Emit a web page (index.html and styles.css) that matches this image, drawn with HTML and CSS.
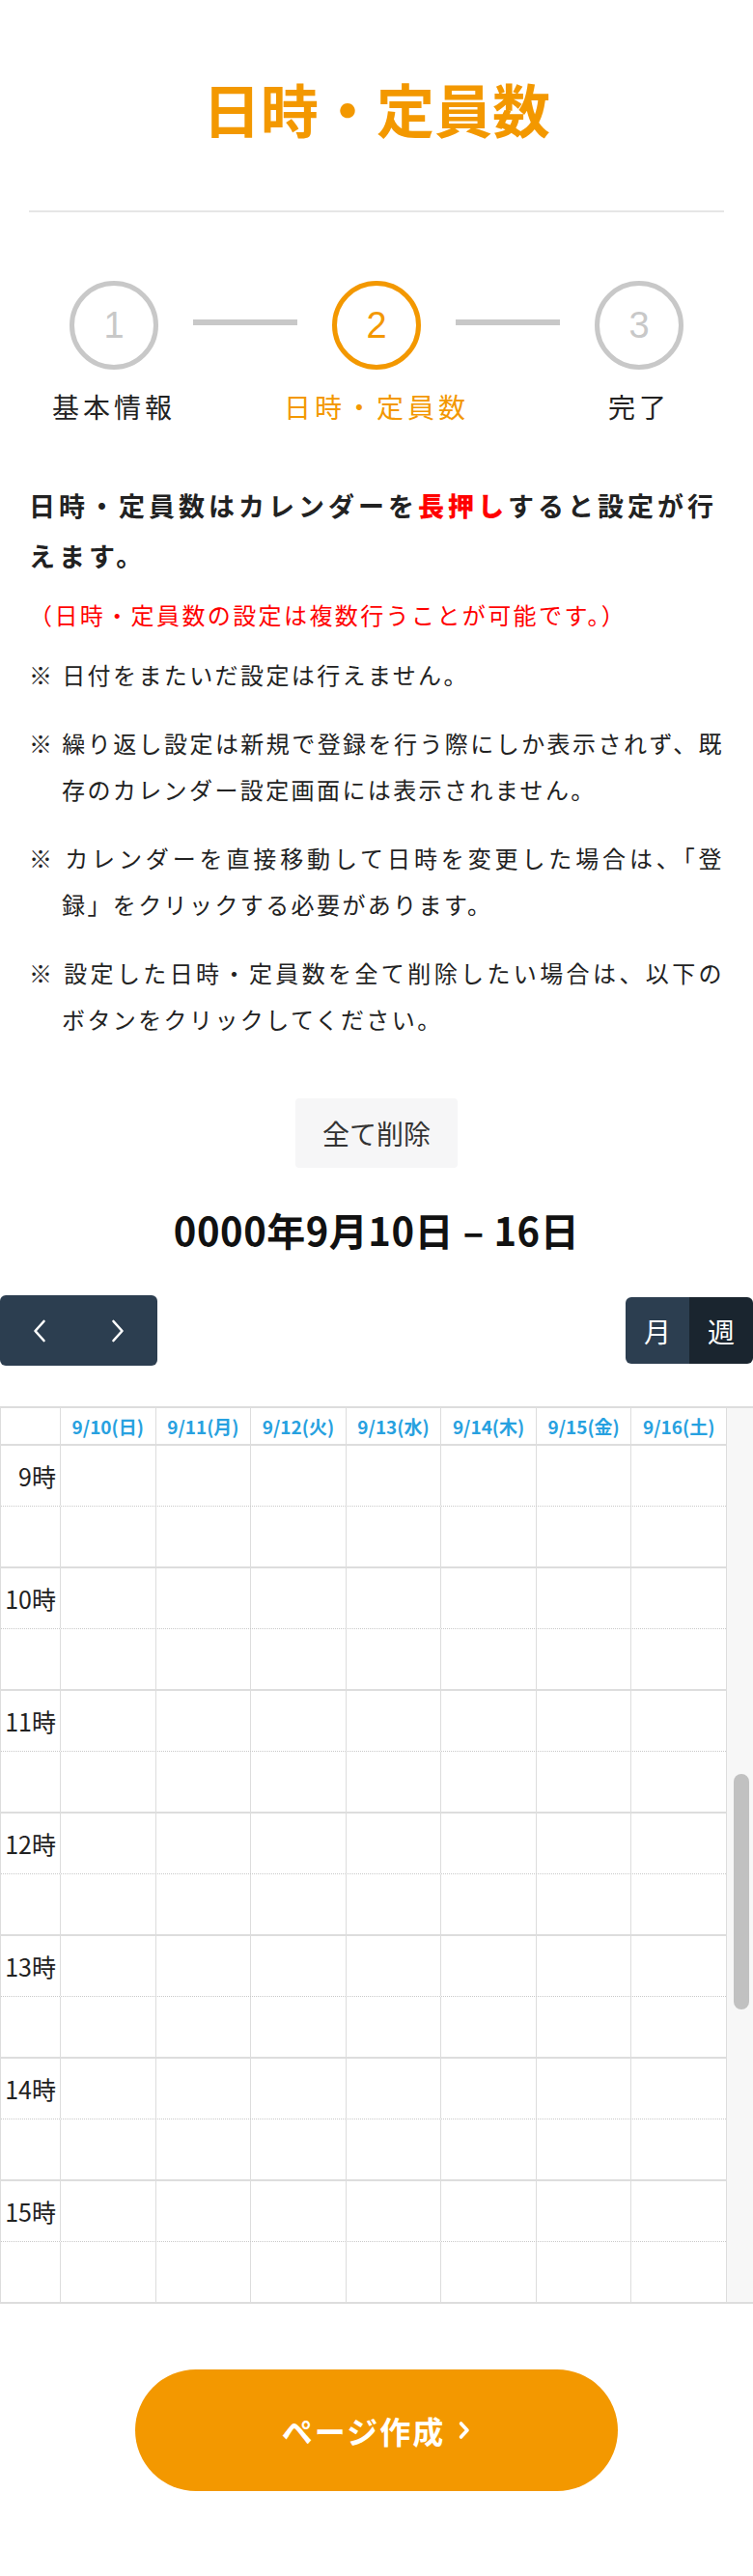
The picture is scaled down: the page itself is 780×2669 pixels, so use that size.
FILE: index.html
```html
<!DOCTYPE html>
<html lang="ja">
<head>
<meta charset="utf-8">
<title>日時・定員数</title>
<link rel="stylesheet" href="styles.css">
</head>
<body>
<main class="page">
  <header class="page-head">
    <h1 class="page-title">日時・定員数</h1>
  </header>

  <div class="steps">
    <div class="step">
      <span class="step-num">1</span>
      <span class="step-label">基本情報</span>
    </div>
    <div class="step-line"></div>
    <div class="step is-current">
      <span class="step-num">2</span>
      <span class="step-label">日時・定員数</span>
    </div>
    <div class="step-line"></div>
    <div class="step">
      <span class="step-num">3</span>
      <span class="step-label">完了</span>
    </div>
  </div>

  <section class="guide">
    <p class="guide-lead">日時・定員数はカレンダーを<strong class="em-red">長押し</strong>すると設定が行えます。</p>
    <p class="guide-note">（日時・定員数の設定は複数行うことが可能です。）</p>
    <ul class="notes">
      <li>※ 日付をまたいだ設定は行えません。</li>
      <li>※ 繰り返し設定は新規で登録を行う際にしか表示されず、既存のカレンダー設定画面には表示されません。</li>
      <li>※ カレンダーを直接移動して日時を変更した場合は、「登録」をクリックする必要があります。</li>
      <li>※ 設定した日時・定員数を全て削除したい場合は、以下のボタンをクリックしてください。</li>
    </ul>
    <div class="clear-wrap">
      <button type="button" class="btn-clear">全て削除</button>
    </div>
  </section>

  <section class="cal-section">
    <h2 class="cal-title">0000年9月10日 – 16日</h2>
    <div class="cal-toolbar">
      <div class="btn-group">
        <button type="button" class="cal-btn cal-nav" aria-label="前へ">
          <svg width="16" height="24" viewBox="0 0 16 24"><polyline points="12.5,2 3.5,12 12.5,22" fill="none" stroke="#fff" stroke-width="2.6" stroke-linecap="round" stroke-linejoin="round"/></svg>
        </button>
        <button type="button" class="cal-btn cal-nav" aria-label="次へ">
          <svg width="16" height="24" viewBox="0 0 16 24"><polyline points="3.5,2 12.5,12 3.5,22" fill="none" stroke="#fff" stroke-width="2.6" stroke-linecap="round" stroke-linejoin="round"/></svg>
        </button>
      </div>
      <div class="btn-group">
        <button type="button" class="cal-btn cal-view">月</button>
        <button type="button" class="cal-btn cal-view is-active">週</button>
      </div>
    </div>

    <div class="cal">
      <div class="cal-main">
        <div class="cal-head">
          <div></div>
          <div>9/10(日)</div>
          <div>9/11(月)</div>
          <div>9/12(火)</div>
          <div>9/13(水)</div>
          <div>9/14(木)</div>
          <div>9/15(金)</div>
          <div>9/16(土)</div>
        </div>
        <div class="cal-body">
          <div class="slot slot-half"><div class="axis">9時</div><div></div><div></div><div></div><div></div><div></div><div></div><div></div></div>
          <div class="slot slot-hour"><div class="axis"></div><div></div><div></div><div></div><div></div><div></div><div></div><div></div></div>
          <div class="slot slot-half"><div class="axis">10時</div><div></div><div></div><div></div><div></div><div></div><div></div><div></div></div>
          <div class="slot slot-hour"><div class="axis"></div><div></div><div></div><div></div><div></div><div></div><div></div><div></div></div>
          <div class="slot slot-half"><div class="axis">11時</div><div></div><div></div><div></div><div></div><div></div><div></div><div></div></div>
          <div class="slot slot-hour"><div class="axis"></div><div></div><div></div><div></div><div></div><div></div><div></div><div></div></div>
          <div class="slot slot-half"><div class="axis">12時</div><div></div><div></div><div></div><div></div><div></div><div></div><div></div></div>
          <div class="slot slot-hour"><div class="axis"></div><div></div><div></div><div></div><div></div><div></div><div></div><div></div></div>
          <div class="slot slot-half"><div class="axis">13時</div><div></div><div></div><div></div><div></div><div></div><div></div><div></div></div>
          <div class="slot slot-hour"><div class="axis"></div><div></div><div></div><div></div><div></div><div></div><div></div><div></div></div>
          <div class="slot slot-half"><div class="axis">14時</div><div></div><div></div><div></div><div></div><div></div><div></div><div></div></div>
          <div class="slot slot-hour"><div class="axis"></div><div></div><div></div><div></div><div></div><div></div><div></div><div></div></div>
          <div class="slot slot-half"><div class="axis">15時</div><div></div><div></div><div></div><div></div><div></div><div></div><div></div></div>
          <div class="slot slot-hour"><div class="axis"></div><div></div><div></div><div></div><div></div><div></div><div></div><div></div></div>
        </div>
      </div>
      <div class="cal-gutter"><div class="cal-thumb"></div></div>
    </div>
  </section>

  <div class="submit-wrap">
    <button type="button" class="btn-submit">ページ作成<svg class="btn-submit-icon" width="14" height="22" viewBox="0 0 14 22"><polyline points="3.5,4 10,11 3.5,18" fill="none" stroke="#fff" stroke-width="3.6" stroke-linecap="round" stroke-linejoin="round"/></svg></button>
  </div>
</main>
</body>
</html>
```

FILE: styles.css
```css
* {
  box-sizing: border-box;
}

html, body {
  margin: 0;
  padding: 0;
  background: #fff;
}

body {
  font-family: "Noto Sans CJK JP", "Noto Sans", sans-serif;
  color: #222;
}

.page {
  width: 780px;
  padding-bottom: 86px;
}

/* ---------- title ---------- */
.page-head {
  padding: 70px 30px 0;
}

.page-title {
  margin: 0;
  text-align: center;
  font-size: 60px;
  line-height: 84px;
  font-weight: 700;
  color: #f39800;
  padding-bottom: 64px;
  border-bottom: 2px solid #e6e6e6;
}

/* ---------- steps ---------- */
.steps {
  display: flex;
  justify-content: center;
  align-items: flex-start;
  margin-top: 71px;
}

.step {
  width: 92px;
  display: flex;
  flex-direction: column;
  align-items: center;
}

.step-num {
  width: 92px;
  height: 92px;
  border: 5px solid #c8c8c8;
  border-radius: 50%;
  display: flex;
  align-items: center;
  justify-content: center;
  font-family: "Liberation Sans", Arial, sans-serif;
  font-size: 38px;
  color: #c8c8c8;
}

.step-label {
  margin-top: 18px;
  white-space: nowrap;
  font-size: 28px;
  line-height: 40px;
  letter-spacing: 4px;
  color: #222;
}

.step.is-current .step-num {
  border-color: #f39800;
  color: #f39800;
}

.step.is-current .step-label {
  color: #f39800;
}

.step-line {
  width: 108px;
  height: 6px;
  margin: 40px 36px 0;
  background: #c8c8c8;
}

/* ---------- guide ---------- */
.guide {
  padding: 0 30px;
  margin-top: 57px;
}

.guide-lead {
  margin: 0;
  font-size: 27px;
  line-height: 52px;
  font-weight: 700;
  letter-spacing: 4px;
}

.em-red {
  color: #ff0000;
}

.guide-note {
  margin: 11px 0 0;
  font-size: 24px;
  line-height: 48px;
  letter-spacing: 2.4px;
  color: #ff0000;
}

.notes {
  list-style: none;
  margin: 14px 0 0;
  padding: 0;
}

.notes li {
  font-size: 24px;
  line-height: 48px;
  letter-spacing: 2.4px;
  padding-left: 34px;
  text-indent: -34px;
  text-align: justify;
  margin-bottom: 23px;
}

.notes li:last-child {
  margin-bottom: 0;
}

.clear-wrap {
  display: flex;
  justify-content: center;
  margin-top: 58px;
}

.btn-clear {
  height: 72px;
  padding: 0 28px;
  border: 0;
  border-radius: 4px;
  background: #f6f6f7;
  font-family: inherit;
  font-size: 28px;
  color: #333;
}

/* ---------- calendar ---------- */
.cal-section {
  margin-top: 36px;
}

.cal-title {
  margin: 0;
  text-align: center;
  font-size: 40px;
  line-height: 56px;
  font-weight: 700;
  color: #111;
  letter-spacing: 0.5px;
}

.cal-toolbar {
  margin-top: 40px;
  display: flex;
  justify-content: space-between;
  align-items: center;
}

.btn-group {
  display: flex;
  border-radius: 6px;
  overflow: hidden;
}

.cal-btn {
  border: 0;
  margin: 0;
  background: #2c3e50;
  color: #fff;
  font-family: inherit;
  display: flex;
  align-items: center;
  justify-content: center;
}

.cal-nav {
  width: 81.5px;
  height: 73px;
}

.cal-view {
  height: 69px;
  padding: 0 19px;
  font-size: 28px;
}

.cal-view.is-active {
  background: #1a252f;
}

.cal {
  margin-top: 42px;
  display: flex;
  border-top: 2px solid #dddddd;
  border-bottom: 2px solid #dddddd;
  border-left: 1px solid #dddddd;
}

.cal-main {
  flex: 1;
  min-width: 0;
}

.cal-head,
.slot {
  display: grid;
  grid-template-columns: 61px repeat(7, 1fr);
}

.cal-head {
  height: 39px;
  border-bottom: 2px solid #dddddd;
}

.cal-head > div {
  border-left: 1px solid #dddddd;
  display: flex;
  align-items: center;
  justify-content: center;
  font-size: 19px;
  font-weight: 700;
  color: #27a1e0;
  white-space: nowrap;
}

.cal-head > div:first-child {
  border-left: 0;
}

.slot {
  height: 63px;
}

.slot-half {
  border-bottom: 1px dotted #c9c9c9;
}

.slot-hour {
  height: 64px;
  border-bottom: 2px solid #dddddd;
}

.slot-hour:last-child {
  height: 62px;
  border-bottom: 0;
}

.slot > div {
  border-left: 1px solid #dddddd;
}

.slot > div.axis {
  border-left: 0;
  text-align: right;
  padding: 13px 4px 0 0;
  font-size: 25px;
  line-height: 36px;
  color: #222;
  white-space: nowrap;
}

.cal-gutter {
  width: 28px;
  border-left: 1px solid #dddddd;
  background: #f7f7f7;
  padding: 379px 4px 0 7px;
}

.cal-thumb {
  height: 244px;
  border-radius: 8px;
  background: #c1c1c1;
}

/* ---------- submit ---------- */
.submit-wrap {
  display: flex;
  justify-content: center;
  margin-top: 68px;
}

.btn-submit {
  width: 500px;
  height: 126px;
  border: 0;
  border-radius: 63px;
  background: #f39800;
  color: #fff;
  font-family: inherit;
  font-size: 32px;
  font-weight: 700;
  letter-spacing: 2px;
  display: flex;
  align-items: center;
  justify-content: center;
}

.btn-submit-icon {
  margin-left: 13px;
}
```
